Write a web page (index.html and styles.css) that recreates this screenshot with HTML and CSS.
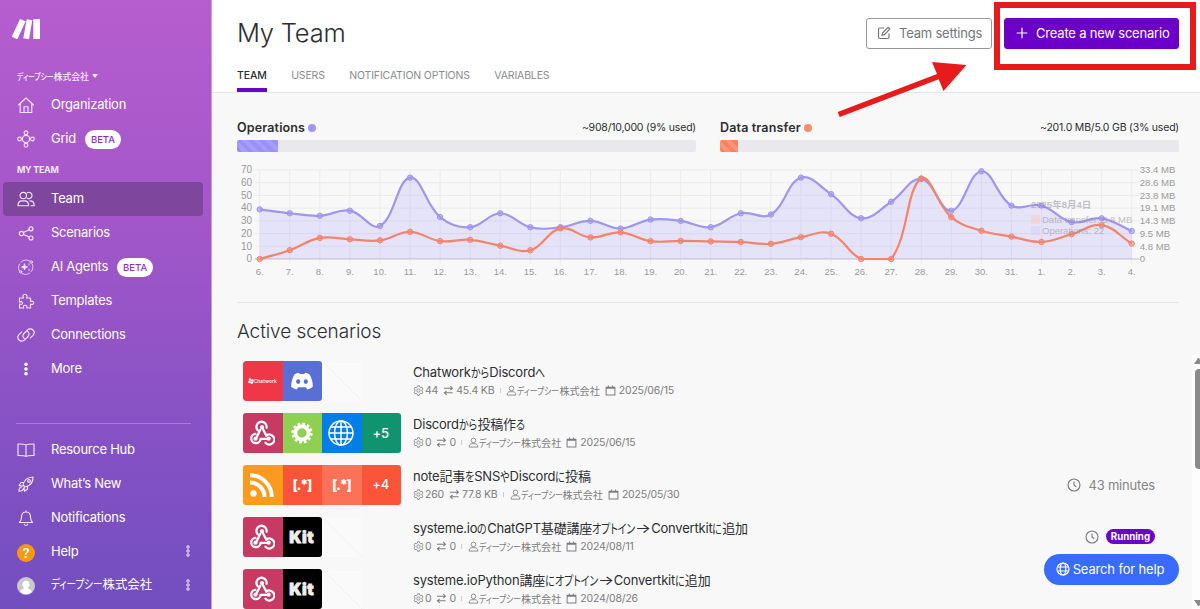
FILE: index.html
```
<!DOCTYPE html>
<html lang="ja">
<head>
<meta charset="utf-8">
<title>My Team</title>
<link rel="stylesheet" href="styles.css">
</head>
<body>
<svg class="defs" width="0" height="0">
	<symbol id="gear" viewBox="0 0 12 12"><path d="M5 .8h2l.4 1.500 1 .6 1.500-.4 1 1.700-1.100 1.100v1.400l1.100 1.100-1 1.700-1.500-.4-1 .6-.4 1.500h-2l-.4-1.500-1-.6-1.500.4-1-1.700 1.100-1.100V5.300L1.100 4.200l1-1.700 1.500.4 1-.6z"/><circle cx="6" cy="6" r="1.800"/></symbol>
	<symbol id="swap" viewBox="0 0 12 12"><path d="M1 3.500h9M8 1.300l2.300 2.200L8 5.500M10.500 8.500h-9M4 6.500L1.500 8.500 4 10.700"/></symbol>
	<symbol id="user" viewBox="0 0 12 12"><circle cx="6" cy="3.700" r="2.500"/><path d="M1.200 11c0-2.300 1.300-3.700 3-3.700h3.600c1.700 0 3 1.400 3 3.700z"/></symbol>
	<symbol id="cal" viewBox="0 0 12 12"><path d="M1.200 2.500h9.600v8.500H1.200zM1.200 3.500h9.600M3.700.5v2M8.300.5v2"/></symbol>
	<symbol id="clock" viewBox="0 0 14 14"><circle cx="7" cy="7" r="6"/><path d="M7 3.500V7l2.200 1.800"/></symbol>
	<symbol id="hook" viewBox="0 0 26 26"><g fill="none" stroke="#fff" stroke-width="2.300" stroke-linecap="round"><path d="M8.700 10.200a5.100 5.100 0 1 1 8.900-2.500M13 7.300l4.300 8.200a5 5 0 1 1-.8 7.300M11.300 9.800L7.400 17.800M6.300 13.800a4.700 4.700 0 1 0 5.300 5H19"/></g><g fill="#fff"><circle cx="13" cy="7" r="2.100"/><circle cx="6.500" cy="18.700" r="2.100"/><circle cx="19.700" cy="18.700" r="2.100"/></g></symbol>
	<symbol id="globe" viewBox="0 0 28 28"><g fill="none" stroke="#fff"><circle cx="14" cy="14" r="12"/><ellipse cx="14" cy="14" rx="6.500" ry="12"/><path d="M14 2v24M2 14h24M4 8h20M4 20h20"/></g></symbol>
	<symbol id="globe-s" viewBox="0 0 14 14"><g fill="none" stroke="#fff" stroke-width="1.200"><circle cx="7" cy="7" r="6"/><ellipse cx="7" cy="7" rx="2.800" ry="6"/><path d="M1.500 5h11M1.500 9h11"/></g></symbol>
</svg>
<div class="app">
	<aside class="sidebar">
		<svg class="logo" viewBox="0 0 30 22"><path d="M8 0l5.700 2.300-8.400 18L-.3 17.700zM14.700.3l5.600 1L17 20.300l-5.700-1zM21.300 0H28v20h-6.700z" fill="#fff"/></svg>
		<div class="org"><span class="jp"><span class="k6">ディープシー</span>株式会社</span><i class="caret"></i></div>
		<nav class="menu">
			<a class="item"><svg viewBox="0 0 18 18"><path d="M1.500 9L9 2l7.500 7M3.200 7.800v8.700h11.600V7.800M7 16.500v-5.800h4v5.800"/></svg><span>Organization</span></a>
			<a class="item"><svg viewBox="0 0 18 18"><circle cx="9" cy="9" r="3.600"/><circle cx="9" cy="2.700" r="1.900"/><circle cx="9" cy="15.300" r="1.900"/><circle cx="2.600" cy="9" r="1.900"/><circle cx="15.400" cy="9" r="1.900"/></svg><span>Grid</span><b class="beta">BETA</b></a>
			<div class="label">MY TEAM</div>
			<a class="item active"><svg viewBox="0 0 18 18"><circle cx="6.300" cy="5.500" r="3.200"/><path d="M1 15.700c0-3 1.800-4.800 4-4.800h2.600c2.300 0 4 1.800 4 4.800zM10.300 2.700a3.200 3.200 0 1 1 0 5.600M13 10.900c2.500 0 4.200 1.800 4.200 4.800H14"/></svg><span>Team</span></a>
			<a class="item"><svg viewBox="0 0 18 18"><circle cx="4.500" cy="9.500" r="2.200"/><circle cx="14" cy="4.800" r="2"/><circle cx="14" cy="14" r="2"/><path d="M6.500 8.500l5.700-2.800M6.500 10.500l5.700 2.600"/></svg><span>Scenarios</span></a>
			<a class="item"><svg class="thin" viewBox="0 0 18 18"><path d="M4 4a7 7 0 0 1 9-.8M15 5.500a7 7 0 0 1-1 8.300M12.500 15.200A7 7 0 0 1 2.500 6"/><circle cx="14.200" cy="4" r="1.200"/><circle cx="3.600" cy="13.700" r="1.200"/><path d="M7.500 6l.8 2.200 2.200.8-2.200.8L7.500 12l-.8-2.200L4.500 9l2.200-.8zM12 5.700v1.600M12 11v1.600" fill="#fff"/></svg><span>AI Agents</span><b class="beta">BETA</b></a>
			<a class="item"><svg viewBox="0 0 18 18"><path d="M2.500 6h4c-1-1.700-.5-3.800 1.500-3.800s2.500 2.100 1.500 3.800h4v3.500c1.300-.8 3.200-.3 3.200 1.300s-1.900 2.100-3.200 1.200v4h-3.800c.7-1.500.2-2.800-1.500-2.800s-2.200 1.300-1.500 2.800H2.500V12c1.500.8 3 .4 3-1s-1.500-1.800-3-1z"/></svg><span>Templates</span></a>
			<a class="item"><svg viewBox="0 0 18 18"><path d="M8 13C5.700 11.800 5.300 9.300 7 7.500l3.300-3.300c1.700-1.700 4.300-1.600 5.700-.2s1.500 3.700 0 5.300l-2.600 2.600M10 5c2.300 1.200 2.700 3.700 1 5.500l-3.300 3.300c-1.700 1.700-4.300 1.600-5.700.2s-1.500-3.700 0-5.300l2.600-2.600"/></svg><span>Connections</span></a>
			<a class="item"><svg viewBox="0 0 18 18"><g fill="#fff" stroke="none"><circle cx="9" cy="4.200" r="1.800"/><circle cx="9" cy="9" r="1.800"/><circle cx="9" cy="13.800" r="1.800"/></g></svg><span>More</span></a>
		</nav>
		<nav class="menu bottom">
			<a class="item"><svg viewBox="0 0 18 18"><path d="M9 4C7.500 2.900 5 2.900 1 3v11.500c4-.1 6.500 0 8 1 1.500-1 4-1.100 8-1V3c-4-.1-6.500-.1-8 1zM9 4v11.500"/></svg><span>Resource Hub</span></a>
			<a class="item"><svg viewBox="0 0 18 18"><path d="M6 10c1-4.500 4-7.800 10-8 .2 6-3.500 9-8 10zM6.500 7.500H4L2 10.500l3.500.5M10.500 11.500V14l-3 2.200L7 12.500M4.500 12c-2 0-2.500 2-2.500 4.200 2 0 4.200-.6 4.200-2.700"/><circle cx="12" cy="6" r="1.400"/></svg><span>What’s New</span></a>
			<a class="item"><svg viewBox="0 0 18 18"><path d="M9 1.700V3M2.500 13.500c1.500-1.300 2-2.300 2-5.500 0-3 1.700-5 4.500-5s4.500 2 4.500 5c0 3.200.5 4.200 2 5.500zM7.300 15.300c.4 1.300 3 1.300 3.400 0"/></svg><span>Notifications</span></a>
			<a class="item"><em class="help">?</em><span>Help</span><i class="dots"></i></a>
			<a class="item"><svg viewBox="0 0 18 18"><circle cx="9" cy="9" r="9" fill="#c9c9c9" stroke="none"/><path d="M9 3.800c4.500 0 4 5.500 2 7 .3 1.600 3.300 1.300 3.700 3.700-2.500 3.400-8.900 3.400-11.400 0 .4-2.400 3.400-2.100 3.700-3.700-2-1.500-2.500-7 2-7z" fill="#fff" stroke="none"/></svg><span class="jp account"><span class="k6">ディープシー</span>株式会社</span><i class="dots"></i></a>
		</nav>
	</aside>

	<main class="main">
		<header class="top">
			<div class="titlebar">
				<h1>My Team</h1>
				<button class="btn"><svg viewBox="0 0 14 14"><path d="M7 2H3Q1.500 2 1.500 3.500V11Q1.500 12.500 3 12.500h7.500Q12 12.500 12 11V7.500M5 9.300l.6-2.400 5.600-5.600 1.700 1.700L7.400 8.700z"/></svg>Team settings</button>
				<button class="btn primary"><svg viewBox="0 0 14 14"><path d="M7 1.800v10.500M1.700 7h10.600"/></svg>Create a new scenario</button>
			</div>
			<div class="tabs"><a class="on">TEAM</a><a>USERS</a><a>NOTIFICATION OPTIONS</a><a>VARIABLES</a></div>
		</header>
		<section class="usage">
			<div class="meters">
				<div class="meter ops"><div class="row"><b>Operations</b><i></i><span>~908/10,000 (9% used)</span></div><div class="bar"><div class="fill" style="width:9%"></div></div></div>
				<div class="meter data"><div class="row"><b>Data transfer</b><i></i><span>~201.0 MB/5.0 GB (3% used)</span></div><div class="bar"><div class="fill" style="width:4%"></div></div></div>
			</div>
			<svg id="chart" class="chart" width="943" height="125"></svg>
		</section>
		<section class="scenarios">
			<h2>Active scenarios</h2>
			<div class="scroll">
				<div class="list">
					<div class="scenario">
						<div class="tiles">
							<div class="tile chatwork"><svg viewBox="0 0 6 6"><circle cx="2" cy="1.600" r="1.300"/><circle cx="4.500" cy="2.500" r="1.300"/><circle cx="1.500" cy="4" r="1.300"/><circle cx="3.800" cy="4.700" r="1.200"/></svg>Chatwork</div>
							<div class="tile discord"><svg viewBox="0 0 24 24"><path d="M4.500 5.500Q6.500 4 9 3.700l.7 1.400q2.300-.3 4.600 0l.7-1.400q2.500.3 4.500 1.800 3.500 5.500 3.300 12.300-2.300 2-5.600 2.700l-1.300-2.200H8.100l-1.300 2.200q-3.300-.7-5.600-2.700Q1 11 4.500 5.500z" fill="#fff"/><g fill="#5a6fd4"><ellipse cx="8.200" cy="12.600" rx="2.100" ry="2.300"/><ellipse cx="15.800" cy="12.600" rx="2.100" ry="2.300"/></g></svg></div>
							<div class="tile empty"></div><div class="tile empty last"></div>
						</div>
						<div class="info"><h3 class="jp">Chatwork<span class="k2">から</span>Discord<span class="k1">へ</span></h3>
							<p><svg><use href="#gear"/></svg>44<svg class="sw"><use href="#swap"/></svg>45.4 KB<i class="sep"></i><svg class="u"><use href="#user"/></svg><span class="jp name"><span class="k6">ディープシー</span>株式会社</span><svg class="date"><use href="#cal"/></svg>2025/06/15</p></div>
					</div>
					<div class="scenario">
						<div class="tiles">
							<div class="tile webhook"><svg><use href="#hook"/></svg></div>
							<div class="tile tools"><svg viewBox="0 0 24 24"><circle cx="12" cy="12" r="6.600" fill="none" stroke="#fff" stroke-width="3.800"/><circle cx="12" cy="12" r="9.300" fill="none" stroke="#fff" stroke-width="2.600" stroke-dasharray="2.700 2.170"/></svg></div>
							<div class="tile http"><svg><use href="#globe"/></svg></div>
							<div class="tile more-green">+5</div>
						</div>
						<div class="info"><h3 class="jp">Discord<span class="k2">から</span>投稿作<span class="k1">る</span></h3>
							<p><svg><use href="#gear"/></svg>0<svg class="sw"><use href="#swap"/></svg>0<i class="sep"></i><svg class="u"><use href="#user"/></svg><span class="jp name"><span class="k6">ディープシー</span>株式会社</span><svg class="date"><use href="#cal"/></svg>2025/06/15</p></div>
					</div>
					<div class="scenario">
						<div class="tiles">
							<div class="tile rss"><svg viewBox="0 0 24 24"><circle cx="3.500" cy="20.500" r="3.200" fill="#fff"/><path d="M0 9.500A14.500 14.500 0 0 1 14.500 24M0 2.200A21.800 21.800 0 0 1 21.800 24" fill="none" stroke="#fff" stroke-width="4"/></svg></div>
							<div class="tile parser">[.*]</div>
							<div class="tile parser light">[.*]</div>
							<div class="tile parser plus">+4</div>
						</div>
						<div class="info"><h3 class="jp">note記事<span class="k1">を</span>SNS<span class="k1">や</span>Discord<span class="k1">に</span>投稿</h3>
							<p><svg><use href="#gear"/></svg>260<svg class="sw"><use href="#swap"/></svg>77.8 KB<i class="sep"></i><svg class="u"><use href="#user"/></svg><span class="jp name"><span class="k6">ディープシー</span>株式会社</span><svg class="date"><use href="#cal"/></svg>2025/05/30</p></div>
						<div class="when"><svg><use href="#clock"/></svg>43 minutes</div>
					</div>
					<div class="scenario">
						<div class="tiles">
							<div class="tile webhook"><svg><use href="#hook"/></svg></div>
							<div class="tile kit">Kit</div>
							<div class="tile empty"></div><div class="tile empty last"></div>
						</div>
						<div class="info"><h3 class="jp">systeme.io<span class="k1">の</span>ChatGPT基礎講座<span class="k5">オプトイン</span><span class="to">→</span>Convertkit<span class="k1">に</span>追加</h3>
							<p><svg><use href="#gear"/></svg>0<svg class="sw"><use href="#swap"/></svg>0<i class="sep"></i><svg class="u"><use href="#user"/></svg><span class="jp name"><span class="k6">ディープシー</span>株式会社</span><svg class="date"><use href="#cal"/></svg>2024/08/11</p></div>
						<div class="when"><svg><use href="#clock"/></svg><b class="running">Running</b></div>
					</div>
					<div class="scenario">
						<div class="tiles">
							<div class="tile webhook"><svg><use href="#hook"/></svg></div>
							<div class="tile kit">Kit</div>
							<div class="tile empty"></div><div class="tile empty last"></div>
						</div>
						<div class="info"><h3 class="jp">systeme.ioPython講座<span class="k1">に</span><span class="k5">オプトイン</span><span class="to">→</span>Convertkit<span class="k1">に</span>追加</h3>
							<p><svg><use href="#gear"/></svg>0<svg class="sw"><use href="#swap"/></svg>0<i class="sep"></i><svg class="u"><use href="#user"/></svg><span class="jp name"><span class="k6">ディープシー</span>株式会社</span><svg class="date"><use href="#cal"/></svg>2024/08/26</p></div>
					</div>
				</div>
				<div class="scrollbar"><i class="up"></i><i class="thumb"></i><i class="down"></i></div>
			</div>
		</section>
	</main>
</div>
<button class="search"><svg><use href="#globe-s"/></svg>Search for help</button>
<div class="highlight"></div>
<svg class="arrow" viewBox="0 0 132 58"><path d="M1.700 52L101 14 96 2l34.500 3L107.500 31l-4.800-11.700L3.700 57z" fill="#e71b1b"/></svg>
<script src="chart.js"></script>
</body>
</html>
```
FILE: styles.css
```
/* base */
* {box-sizing:border-box;}
html,body {margin:0;padding:0;height:100%;overflow:hidden;}
body {font-family:Inter,"Noto Sans CJK JP",sans-serif;letter-spacing:-.2px;color:#2d2e32;background:#f8f8f8;position:relative;}
h1,h2,h3,p {margin:0;font-weight:400;}
i,em {font-style:normal;}
button {font-family:inherit;letter-spacing:inherit;}
.defs {position:absolute;}
.jp {font-feature-settings:"palt";}
/* condensed kana, the number is how many characters */
.k1,.k2,.k5,.k6 {display:inline-block;transform:scaleX(.77);transform-origin:0 0;}
.k1 {margin-right:-.2em;}
.k2 {margin-right:-.38em;}
.k5 {margin-right:-.970em;}
.k6 {margin-right:-1.230em;}
.to {display:inline-block;transform:scaleX(1.3);transform-origin:0 0;margin-right:.27em;}
.app {display:flex;height:609px;}

/* sidebar */
.sidebar {width:212px;flex:none;padding-left:3px;color:#fff;background:linear-gradient(#b65dcf,#a357c9 35%,#8852c5 68%,#724ebf);border-right:1px solid #c99fe0;display:flex;flex-direction:column;}
.logo {width:30px;height:22px;margin:19px 0 0 9px;flex:none;overflow:visible;}
.org {height:18px;margin:26px 0 3px 14px;font-size:8.800px;display:flex;align-items:center;opacity:.9;font-weight:500;letter-spacing:0;}
.caret {border:3.500px solid transparent;border-top:4px solid #fff;border-bottom:0;margin-left:3px;}
.item {display:flex;align-items:center;height:34px;width:201px;padding:0 13px 0 14px;border-radius:4px;font-size:13px;letter-spacing:-.250px;}
.item > svg {width:18px;height:18px;margin:0 16px 0 0;fill:none;stroke:#f3e4fa;stroke-width:1.150;stroke-linejoin:round;stroke-linecap:round;flex:none;}
.item > svg.thin {stroke-width:.8;}
.item > span {position:relative;top:-1px;}
.item.active {background:#7e469d;width:200px;}
.label {height:26px;padding:7px 0 0 14px;font-size:9px;line-height:13px;font-weight:700;opacity:.85;letter-spacing:-.3px;}
.beta {background:#fff;color:#8b2fc0;border-radius:10px;font-size:9.500px;font-weight:500;height:19px;line-height:19px;padding:0 6px;margin:1px 0 0 9px;letter-spacing:0;}
.bottom {margin-top:37px;padding-top:9px;}
.bottom:before {content:"";display:block;height:1px;width:175px;margin:-9px 0 9px 13px;background:#a77cd4;}
.item > .account {top:-2px;font-size:12.400px;letter-spacing:0;}
.help {width:18px;height:18px;border-radius:50%;background:#f9980e;text-align:center;line-height:18px;font-size:13px;font-weight:600;margin:1px 16px 0 0;}
.dots {width:4px;height:12px;margin-left:auto;margin-top:-2px;margin-right:1px;background:radial-gradient(circle,#cdb0e6 1.500px,transparent 2px) 0 0/4px 4px;}

/* header */
.main {flex:1;display:flex;flex-direction:column;min-width:0;}
.top {height:93px;flex:none;background:#fff;border-bottom:1px solid #e5e5e8;padding:0 21px 0 25px;}
.titlebar {display:flex;align-items:center;height:66px;}
h1 {font-size:25.500px;font-weight:300;margin-right:auto;padding-bottom:1px;letter-spacing:-.2px;}
.btn {display:flex;align-items:center;height:31px;width:126px;border:1px solid #96999c;border-radius:3px;background:#fff;color:#72767b;font-size:13px;padding:0 0 0 10px;white-space:nowrap;}
.btn svg {width:14px;height:14px;margin-right:8px;fill:none;stroke:currentColor;stroke-width:1.200;flex:none;}
.btn.primary {margin-left:12px;width:175px;background:#6b00c8;border-color:#6b00c8;color:#fff;}
.btn.primary svg {margin-right:7px;}
.tabs {display:flex;gap:24.500px;font-size:10.500px;color:#8a8b8e;height:26px;letter-spacing:-.150px;}
.tabs a {line-height:19px;height:26px;}
.tabs .on {color:#2d2e32;border-bottom:4px solid #6b00c8;font-weight:500;}

/* usage */
.usage {margin:0 21px 0 25px;height:210px;border-bottom:1px solid #e6e6e8;flex:none;}
.meters {display:flex;gap:24px;padding-top:26px;}
.meter {flex:1;}
.row {display:flex;align-items:center;height:17px;font-size:10.500px;}
.row b {font-size:12.500px;font-weight:600;letter-spacing:.150px;}
.row i {width:8px;height:8px;border-radius:50%;margin-left:3px;}
.row span {margin-left:auto;}
.bar {height:12px;margin-top:4px;background:#e9e9ed;border-radius:2px;overflow:hidden;}
.fill {height:12px;}
.ops i {background:#9f95fb;}
.data i {background:#ff8a6c;}
.ops .fill {background:repeating-linear-gradient(45deg,#9b90fa 0 4px,#a69cfb 4px 8px);}
.data .fill {background:repeating-linear-gradient(45deg,#ff8060 0 4px,#ff9478 4px 8px);}
.chart {display:block;margin-top:8px;overflow:visible;font-family:"Liberation Sans",Arial,sans-serif;font-size:10px;letter-spacing:0;fill:#9a9a9a;}
.chart .mb {font-size:9.600px;}
.chart .grid {stroke:#ebebed;stroke-width:1;fill:none;}
.chart .axis {stroke:#c9c3d8;stroke-width:1.200;}
.chart .area {fill:#9b90fa;fill-opacity:.2;}
.chart .line {fill:none;stroke-width:2.200;}
.chart .dot {stroke-width:1;}
.chart .s-ops {stroke:#9f96ef;}
.chart .s-data {stroke:#f5836b;}
.chart .dot.s-ops {fill:#9f96ef;fill-opacity:.6;}
.chart .dot.s-data {fill:#f5836b;fill-opacity:.6;}
.chart .tip {fill:#8c8a96;opacity:.5;font-family:"Liberation Sans","Noto Sans CJK JP",sans-serif;font-size:9.500px;}

/* scenarios */
.scenarios {flex:1;display:flex;flex-direction:column;min-height:0;}
h2 {font-size:19px;font-weight:300;line-height:26px;height:51px;padding:16px 0 0 25px;letter-spacing:-.080px;flex:none;}
.scroll {display:flex;flex:1;min-height:0;}
.list {flex:1;padding:7px 37px 0 31px;overflow:hidden;}
.scenario {display:flex;height:52px;align-items:flex-start;}
.tiles {display:flex;width:158px;height:40px;border-radius:3px;overflow:hidden;flex:none;}
.tile {width:39.500px;height:40px;display:flex;align-items:center;justify-content:center;color:#fff;font-size:13px;font-weight:500;padding-right:1px;}
.tile svg {width:26px;height:26px;}
.chatwork {background:#f03748;font-size:5px;font-weight:500;letter-spacing:0;border-radius:3px 0 0 3px;}
.chatwork svg {width:6px;height:6px;fill:#fff;}
.discord {background:#5a6fd4;border-radius:0 3px 3px 0;}
.discord svg {width:24px;height:24px;}
.webhook {background:#c73a63;}
.tools {background:#8fcf52;}
.tools svg {width:24px;height:24px;}
.http {background:#027ee8;}
.http svg {width:28px;height:28px;stroke-width:1.500;}
.more-green {background:#10936f;}
.rss {background:#fb9b1e;}
.rss svg {width:24px;height:24px;}
.parser {background:#fb5438;font-size:14px;font-weight:800;letter-spacing:-1.300px;padding-bottom:2px;}
.parser.light {background:#fd7159;}
.parser.plus {font-size:13px;font-weight:500;letter-spacing:-.2px;}
.kit {background:#000;color:#eee;font-size:16px;font-weight:900;-webkit-text-stroke:.8px #eee;letter-spacing:.6px;border-radius:0 3px 3px 0;}
.empty {background:linear-gradient(45deg,transparent 49.500%,#f0f0f0 50%,transparent 50.500%) #fafafa;}
.empty.last {background-color:transparent;}
.info {margin-left:12px;flex:1;}
.info h3 {font-size:13px;line-height:21px;margin-top:1px;white-space:nowrap;letter-spacing:-.2px;}
.info p {display:flex;align-items:center;height:14px;font-size:10.500px;color:#7c7d80;white-space:nowrap;letter-spacing:-.2px;}
.info p svg {width:11px;height:11px;fill:none;stroke:#7c7d80;stroke-width:.9;margin-right:1px;flex:none;}
.info p svg.sw {margin:0 2px 0 5px;stroke-width:1.100;}
.info p svg.u {margin-right:0;}
.info p svg.date {margin:0 3px 0 5px;stroke-width:1.100;}
.name {font-size:10.100px;letter-spacing:0;}
.sep {width:1px;height:5px;background:#ccc;margin:0 5.500px;}
.when {display:flex;align-items:center;height:39px;font-size:13px;color:#85868a;}
.when svg {width:14px;height:14px;fill:none;stroke:#77787c;stroke-width:1.100;margin-right:7px;}
.running {background:#6b00c8;color:#fff;border-radius:8px;height:15px;line-height:15px;font-size:9.700px;font-weight:700;padding:0 5px;letter-spacing:0;}
.scrollbar {width:8px;background:#fdfdfd;display:flex;flex-direction:column;overflow:hidden;padding-left:3px;flex:none;}
.thumb {width:9px;height:100px;border-radius:4px;background:#8a8a8a;margin-top:5px;flex:none;}
.up {border:4.500px solid transparent;border-bottom:6px solid #8a8a8a;border-top:0;margin:4px 0 0 -1px;width:9px;flex:none;}
.down {border:4.500px solid transparent;border-top:6px solid #8a8a8a;border-bottom:0;margin:auto 0 3px -1px;width:9px;}

/* over the page */
.search {position:absolute;left:1044px;top:554px;width:135px;height:31px;border:0;border-radius:16px;background:#3a6bff;color:#fff;font-size:13px;display:flex;align-items:center;justify-content:center;padding:0 3px 1px 0;white-space:nowrap;letter-spacing:-.150px;}
.search svg {width:14px;height:14px;margin-right:3px;}
.highlight {position:absolute;left:994px;top:2px;width:202px;height:68px;border:6px solid #e71b1b;}
.arrow {position:absolute;left:836px;top:60px;width:132px;height:58px;}
```
FILE: chart.js
```
var ops = [39,36,34,38,26,64,33,25,36,25,25,30,24,31,30,25,36,35,64,51,32,45,63,38,69,42,42,29,32,22];
var mb = [0,3.3,7.9,7.4,7,10.2,6.7,7.2,5,3.3,11.5,8.1,10,6.7,6.8,6.6,6.4,5.7,8.2,9.5,0,0,30.2,15.7,10.6,8.4,6.4,9.3,12.7,5.8];
var mbTicks = ["0", "4.8 MB", "9.5 MB", "14.3 MB", "19.1 MB", "23.8 MB", "28.6 MB", "33.4 MB"];
var left = 22.7, step = 30.07, topY = 10, baseY = 99;
var right = left + step * 29;

function points(data, max) {
	return data.map(function (v, i) {
		return [left + i * step, baseY - v / max * (baseY - topY)];
	});
}
function cap(y) {
	return Math.max(topY, Math.min(baseY, y));
}
// smooth curve through the points, control points kept inside the plot
function curve(p) {
	var c = p.map(function (cur, i) {
		var prev = p[i - 1] || cur, next = p[i + 1] || cur;
		var a = Math.hypot(cur[0] - prev[0], cur[1] - prev[1]);
		var b = Math.hypot(next[0] - cur[0], next[1] - cur[1]);
		var fa = 0.4 * a / (a + b), fb = 0.4 * b / (a + b);
		var dx = next[0] - prev[0], dy = next[1] - prev[1];
		return [cur[0] - fa * dx, cap(cur[1] - fa * dy), cur[0] + fb * dx, cap(cur[1] + fb * dy)];
	});
	var d = "M" + p[0];
	for (var i = 1; i < p.length; i++) {
		d += "C" + [c[i - 1][2], c[i - 1][3], c[i][0], c[i][1], p[i][0], p[i][1]];
	}
	return d;
}
function dots(p, cls) {
	return p.map(function (q) {
		return '<circle class="dot ' + cls + '" cx="' + q[0] + '" cy="' + q[1] + '" r="2.7"/>';
	}).join("");
}

var out = "", i, x, y;
for (i = 0; i < 8; i++) {
	y = baseY - i * (baseY - topY) / 7;
	out += '<path class="grid" d="M' + (left - 5) + " " + y + "H" + (right + 8) + '"/>';
	out += '<text x="15" y="' + (y + 3.3) + '" text-anchor="end">' + i * 10 + "</text>";
	out += '<text class="mb" x="' + (right + 8) + '" y="' + (y + 3.3) + '">' + mbTicks[i] + "</text>";
}
for (i = 0; i < 30; i++) {
	x = left + i * step;
	out += '<path class="grid" d="M' + x + " " + topY + "V" + (baseY + 5) + '"/>';
	out += '<text x="' + x + '" y="115.3" font-size="9.5" text-anchor="middle">' + (i < 26 ? i + 6 : i - 25) + ".</text>";
}
out += '<path class="axis" d="M' + (left - 5) + " " + baseY + "H" + (right + 8) + '"/>';
var a = points(ops, 70), b = points(mb, 33.4);
out += '<path class="area" d="' + curve(a) + "V" + baseY + "H" + left + 'Z"/>';
out += '<path class="line s-ops" d="' + curve(a) + '"/>' + dots(a, "s-ops");
out += '<path class="line s-data" d="' + curve(b) + '"/>' + dots(b, "s-data");
out += '<g class="tip"><text x="794" y="48" font-weight="bold">2025年8月4日</text>' +
	'<rect x="794" y="55" width="9" height="9" fill="#ffc9bd"/><text x="805" y="63">Data transfer: 5.8 MB</text>' +
	'<rect x="794" y="66" width="9" height="9" fill="#d5d0fa"/><text x="805" y="74">Operations: 22</text></g>';
document.getElementById("chart").innerHTML = out;
```
